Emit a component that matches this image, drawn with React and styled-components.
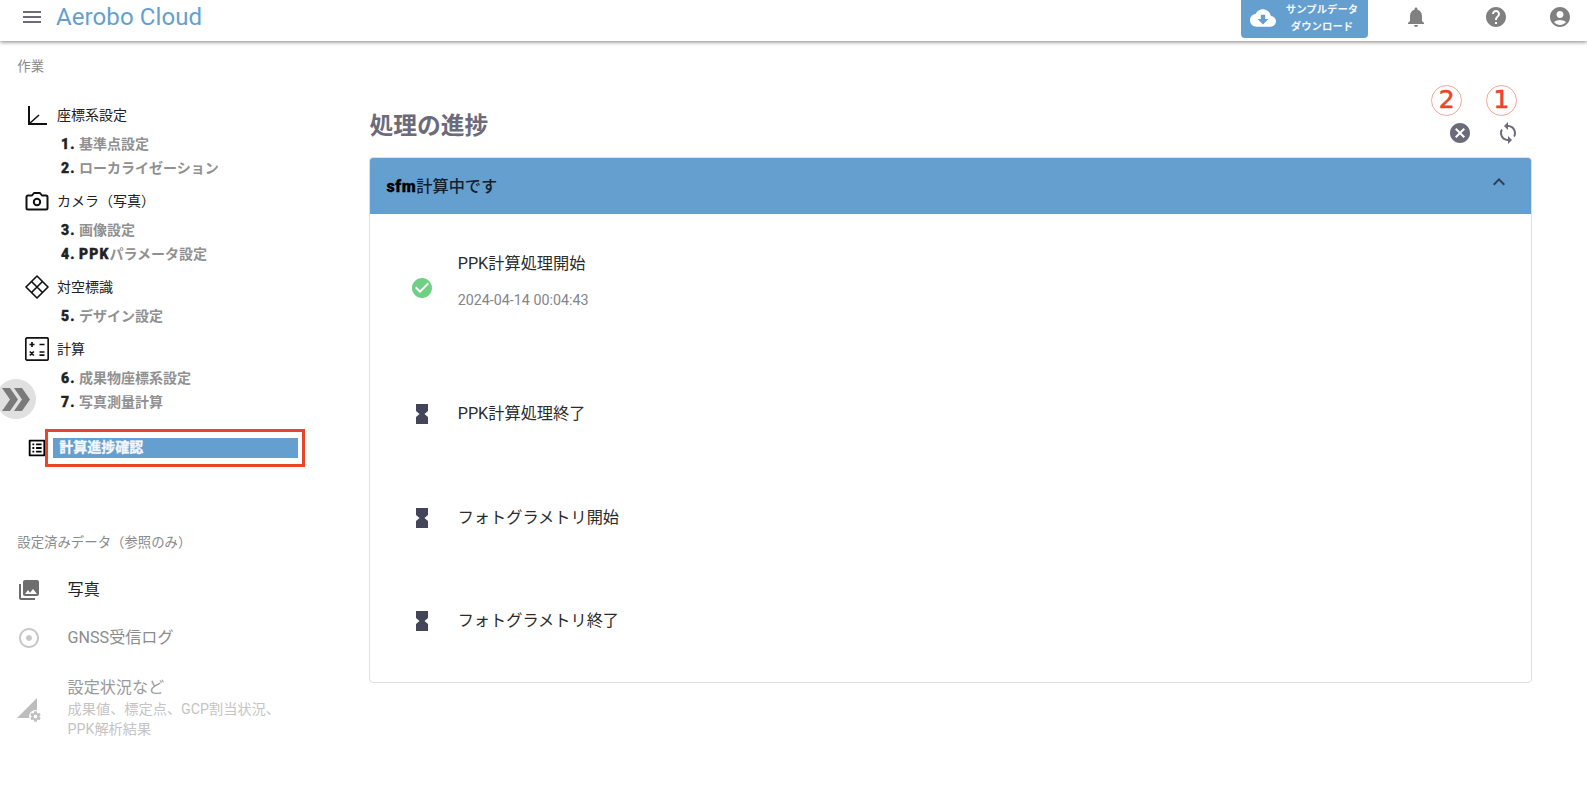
import React from 'react';
import styled, { createGlobalStyle } from 'styled-components';
import {
    MdMenu,
    MdCloudDownload,
    MdNotifications,
    MdHelp,
    MdAccountCircle,
    MdCancel,
    MdSync,
    MdCheckCircle,
    MdExpandLess,
    MdPhotoLibrary,
    MdAdjust,
    MdSettings,
    MdOutlineListAlt,
} from 'react-icons/md';

const FONT = `Roboto, "Noto Sans CJK JP", sans-serif`;
const BLUE = '#649fd0';

const GlobalStyle = createGlobalStyle`
    html, body {
        margin: 0;
        padding: 0;
        background: #fff;
        font-family: ${FONT};
    }
    * {
        box-sizing: border-box;
    }
`;

const Page = styled.div`
    width: 1587px;
    height: 797px;
    overflow: hidden;
    position: relative;
`;

const Header = styled.header`
    height: 41px;
    display: flex;
    align-items: center;
    background: #fff;
    box-shadow: 0 1px 4px rgba(0, 0, 0, 0.5);
    position: relative;
    padding-left: 20px;
`;

const MenuButton = styled.div`
    display: flex;
    color: #6b6b7b;
    font-size: 24px;
    margin-right: 12px;
    margin-top: -8px;
`;

const Logo = styled.div`
    color: ${BLUE};
    font-size: 24px;
    letter-spacing: 0.1px;
    margin-top: -8px;
    flex: 1;
`;

const DownloadButton = styled.div`
    width: 127px;
    height: 38px;
    margin-top: -3px;
    background: ${BLUE};
    border-radius: 0 0 4px 4px;
    display: flex;
    align-items: center;
    padding: 0 0 3px 9px;
    color: #fff;
`;

const DownloadText = styled.div`
    flex: 1;
    font-size: 10.4px;
    font-weight: 700;
    line-height: 17px;
    text-align: center;
    color: #f2f6fa;
`;

const HeaderIcon = styled.div`
    display: flex;
    color: #808080;
    font-size: 24px;
    margin-top: -8px;
    margin-left: ${(p) => p.$left}px;
    margin-right: ${(p) => p.$right || 0}px;
`;

const Body = styled.div`
    display: flex;
`;

const Sidebar = styled.aside`
    width: 369.4px;
    flex: none;
    padding: 16.8px 0 0 17.3px;
`;

const SectionLabel = styled.div`
    font-size: 13.4px;
    line-height: 18px;
    color: #8a8a8a;
    margin-top: ${(p) => p.$top || 0}px;
`;

const TaskList = styled.div`
    margin-top: 27.6px;
    margin-left: -17.3px;
`;

const GroupRow = styled.div`
    height: 24px;
    display: flex;
    align-items: center;
    font-size: 14px;
    color: #222;
    margin-top: ${(p) => p.$top || 0}px;
    margin-bottom: ${(p) => p.$bottom || 4.3}px;
`;

const GroupIcon = styled.div`
    width: 57px;
    padding-left: 25px;
    flex: none;
    display: flex;
    align-items: center;
`;

const GroupLabel = styled.span`
    margin-top: -2px;
`;

const StepRow = styled.div`
    height: 24px;
    line-height: 24px;
    padding-left: 61px;
    font-size: 14px;
    font-weight: 700;
    color: #909090;
    white-space: nowrap;
`;

const StepNo = styled.span`
    display: inline-block;
    width: 18px;
    color: #222;
    font-weight: 900;
    letter-spacing: 1px;
    -webkit-text-stroke: 0.4px #222;
`;

const StepStrong = styled.span`
    color: #222;
    font-weight: 900;
    letter-spacing: 1.1px;
    -webkit-text-stroke: 0.4px #222;
`;

const CurrentRow = styled.div`
    display: flex;
    align-items: center;
    margin-top: 14.8px;
    padding-left: 25.7px;
    color: #000;
    font-size: 22px;
`;

const RedBox = styled.div`
    width: 260px;
    height: 37.4px;
    margin-left: -2.4px;
    border: 3px solid #ea4528;
    padding: 5.4px 4.4px;
    display: flex;
`;

const CurrentBar = styled.div`
    flex: 1;
    height: 20px;
    line-height: 18px;
    background: ${BLUE};
    color: #f4f7fb;
    font-size: 14px;
    font-weight: 700;
    padding-left: 6.5px;
    -webkit-text-stroke: 0.3px #f4f7fb;
`;

const DataList = styled.div`
    margin-top: 13.7px;
    margin-left: -17.3px;
`;

const DataRow = styled.div`
    display: flex;
    align-items: center;
    height: ${(p) => p.$height || 47.6}px;
    padding-left: 17px;
`;

const DataIcon = styled.div`
    width: 50.6px;
    flex: none;
    display: flex;
    font-size: 24px;
    color: ${(p) => p.$color};
    position: relative;
`;

const DataTitle = styled.div`
    font-size: 16.1px;
    line-height: 22px;
    color: ${(p) => p.$color};
`;

const DataNote = styled.div`
    font-size: 14.2px;
    line-height: 20px;
    color: #c4c4c4;
    margin-top: -0.5px;
`;

const SettingsGear = styled.span`
    position: absolute;
    left: 12px;
    top: 12px;
    display: flex;
    font-size: 13px;
    color: #bdbdbd;
    background: #fff;
    border-radius: 50%;
`;

const CollapseHandle = styled.div`
    position: absolute;
    left: -4px;
    top: 379px;
    width: 40px;
    height: 40px;
    border-radius: 50%;
    background: #e0e0e0;
    display: flex;
    align-items: center;
    justify-content: center;
`;

const Main = styled.main`
    width: 1163px;
    flex: none;
`;

const TitleBar = styled.div`
    height: 116px;
    display: flex;
    align-items: flex-end;
    justify-content: space-between;
    padding: 0 12px 12px 0;
`;

const Title = styled.h1`
    margin: 0 0 2.5px;
    font-size: 23.8px;
    line-height: 34px;
    font-weight: 700;
    color: #6b6b7b;
`;

const Actions = styled.div`
    display: flex;
    gap: 24px;
`;

const ActionIcon = styled.div`
    position: relative;
    display: flex;
    color: #6b6b7b;
    font-size: 24px;
`;

const Callout = styled.span`
    position: absolute;
    top: -36px;
    left: ${(p) => p.$left}px;
    width: 31.4px;
    height: 31.4px;
    border-radius: 50%;
    border: 1.5px solid #f3a797;
    color: #ea4528;
    font-family: "DejaVu Sans", sans-serif;
    font-size: 25px;
    font-weight: 400;
    -webkit-text-stroke: 0.6px #ea4528;
    line-height: 28px;
    text-align: center;
`;

const Card = styled.section`
    height: 526px;
    border: 1px solid #e0e0e0;
    border-radius: 4px;
    overflow: hidden;
`;

const CardHeader = styled.div`
    height: 57px;
    margin: -1px -1px 0;
    background: ${BLUE};
    display: flex;
    align-items: center;
    justify-content: space-between;
    padding: 0 21px 2px 17px;
    font-size: 16.2px;
    font-weight: 500;
    color: #16202c;
`;

const HeaderStrong = styled.span`
    font-weight: 900;
    color: #000;
    letter-spacing: 0.6px;
    -webkit-text-stroke: 0.3px #000;
`;

const ChevronWrap = styled.div`
    display: flex;
    font-size: 24px;
    color: #2f3e52;
    margin-top: -6px;
`;

const StepItem = styled.div`
    display: flex;
    align-items: center;
    height: ${(p) => p.$height || 103.7}px;
    padding-left: 39.6px;
`;

const StepIcon = styled.div`
    width: 47.7px;
    flex: none;
    display: flex;
    font-size: 24px;
    color: ${(p) => p.$color || '#45455a'};
`;

const StepName = styled.div`
    font-size: 16.2px;
    color: #2b2b2b;
    line-height: 22px;
`;

const StepDate = styled.div`
    font-size: 14.3px;
    color: #85858a;
    line-height: 18px;
    margin: 16.7px 0 14px;
`;

const AxesIcon = () => (
    <svg width="24" height="24" viewBox="0 0 24 24" fill="none" stroke="#111">
        <path d="M4 3v18h18" strokeWidth="2" />
        <path d="M4 21l10-9" strokeWidth="1.6" />
    </svg>
);

const CameraIcon = () => (
    <svg width="24" height="24" viewBox="0 0 24 24" fill="none" stroke="#111" strokeWidth="2" strokeLinejoin="round">
        <path d="M3 6.5h4L9 4h6l2 2.5h4a1.5 1.5 0 0 1 1.5 1.5v11a1.5 1.5 0 0 1-1.5 1.5H3A1.5 1.5 0 0 1 1.5 19V8A1.5 1.5 0 0 1 3 6.5z" />
        <circle cx="12" cy="13" r="3.2" />
    </svg>
);

const TargetIcon = () => (
    <svg width="24" height="24" viewBox="0 0 24 24" fill="none" stroke="#111" strokeWidth="1.6">
        <path d="M12 1L23 12 12 23 1 12z" strokeLinejoin="round" />
        <path d="M6.5 6.5l11 11M17.5 6.5l-11 11" />
    </svg>
);

const CalcIcon = () => (
    <svg width="24" height="24" viewBox="0 0 24 24" fill="none" stroke="#111" strokeWidth="1.7">
        <rect x="0.8" y="0.8" width="22.4" height="22.4" rx="1.5" />
        <path d="M4.5 7.5h5M7 5v5M14.5 7.5h5M4.8 14.5l4 4M8.8 14.5l-4 4M14.5 15h5M14.5 18.2h5" />
    </svg>
);

const HourglassIcon = () => (
    <svg width="24" height="24" viewBox="0 0 24 24" fill="currentColor">
        <path d="M6 2h12v7l-3.5 3 3.5 3v7H6v-7l3.5-3L6 9z" />
    </svg>
);

const SlopeIcon = () => (
    <svg width="20" height="20" viewBox="0 0 20 20" fill="#bdbdbd">
        <path d="M0 20L20 0v20z" />
    </svg>
);

const DoubleChevron = () => (
    <svg width="28" height="23" viewBox="0 0 28 23" fill="#7a7a7a">
        <path d="M0 0h8l8 11.5-8 11.5H0l8-11.5z" />
        <path d="M12 0h8l8 11.5-8 11.5h-8l8-11.5z" />
    </svg>
);

const Step = ({ no, children }) => (
    <StepRow>
        <StepNo>{no}.</StepNo>
        {children}
    </StepRow>
);

const App = () => {
    return (
        <Page>
            <GlobalStyle />
            <Header>
                <MenuButton><MdMenu /></MenuButton>
                <Logo>Aerobo Cloud</Logo>
                <DownloadButton>
                    <MdCloudDownload size={26} />
                    <DownloadText>
                        サンプルデータ<br />ダウンロード
                    </DownloadText>
                </DownloadButton>
                <HeaderIcon $left={36}><MdNotifications /></HeaderIcon>
                <HeaderIcon $left={56}><MdHelp /></HeaderIcon>
                <HeaderIcon $left={40} $right={15}><MdAccountCircle /></HeaderIcon>
            </Header>
            <Body>
                <Sidebar>
                    <SectionLabel>作業</SectionLabel>
                    <TaskList>
                        <GroupRow>
                            <GroupIcon><AxesIcon /></GroupIcon>
                            <GroupLabel>座標系設定</GroupLabel>
                        </GroupRow>
                        <Step no={1}>基準点設定</Step>
                        <Step no={2}>ローカライゼーション</Step>
                        <GroupRow $top={9.7}>
                            <GroupIcon><CameraIcon /></GroupIcon>
                            <GroupLabel>カメラ（写真）</GroupLabel>
                        </GroupRow>
                        <Step no={3}>画像設定</Step>
                        <Step no={4}><StepStrong>PPK</StepStrong>パラメータ設定</Step>
                        <GroupRow $top={9.7}>
                            <GroupIcon><TargetIcon /></GroupIcon>
                            <GroupLabel>対空標識</GroupLabel>
                        </GroupRow>
                        <Step no={5}>デザイン設定</Step>
                        <GroupRow $top={9.5} $bottom={5.3}>
                            <GroupIcon><CalcIcon /></GroupIcon>
                            <GroupLabel>計算</GroupLabel>
                        </GroupRow>
                        <Step no={6}>成果物座標系設定</Step>
                        <Step no={7}>写真測量計算</Step>
                        <CurrentRow>
                            <MdOutlineListAlt />
                            <RedBox>
                                <CurrentBar>計算進捗確認</CurrentBar>
                            </RedBox>
                        </CurrentRow>
                    </TaskList>
                    <SectionLabel $top={67.8}>設定済みデータ（参照のみ）</SectionLabel>
                    <DataList>
                        <DataRow>
                            <DataIcon $color="#6e6e6e"><MdPhotoLibrary /></DataIcon>
                            <DataTitle $color="#222">写真</DataTitle>
                        </DataRow>
                        <DataRow>
                            <DataIcon $color="#c8c8c8"><MdAdjust /></DataIcon>
                            <DataTitle $color="#8c8c8c">GNSS受信ログ</DataTitle>
                        </DataRow>
                        <DataRow $height={93}>
                            <DataIcon $color="#bdbdbd">
                                <SlopeIcon />
                                <SettingsGear><MdSettings /></SettingsGear>
                            </DataIcon>
                            <div>
                                <DataTitle $color="#9a9a9a">設定状況など</DataTitle>
                                <DataNote>成果値、標定点、GCP割当状況、<br />PPK解析結果</DataNote>
                            </div>
                        </DataRow>
                    </DataList>
                </Sidebar>
                <Main>
                    <TitleBar>
                        <Title>処理の進捗</Title>
                        <Actions>
                            <ActionIcon>
                                <MdCancel />
                                <Callout $left={-17.3}>2</Callout>
                            </ActionIcon>
                            <ActionIcon>
                                <MdSync />
                                <Callout $left={-10.7}>1</Callout>
                            </ActionIcon>
                        </Actions>
                    </TitleBar>
                    <Card>
                        <CardHeader>
                            <div><HeaderStrong>sfm</HeaderStrong>計算中です</div>
                            <ChevronWrap><MdExpandLess /></ChevronWrap>
                        </CardHeader>
                        <StepItem $height={148}>
                            <StepIcon $color="#6fcf83"><MdCheckCircle /></StepIcon>
                            <div>
                                <StepName>PPK計算処理開始</StepName>
                                <StepDate>2024-04-14 00:04:43</StepDate>
                            </div>
                        </StepItem>
                        <StepItem>
                            <StepIcon><HourglassIcon /></StepIcon>
                            <StepName>PPK計算処理終了</StepName>
                        </StepItem>
                        <StepItem>
                            <StepIcon><HourglassIcon /></StepIcon>
                            <StepName>フォトグラメトリ開始</StepName>
                        </StepItem>
                        <StepItem>
                            <StepIcon><HourglassIcon /></StepIcon>
                            <StepName>フォトグラメトリ終了</StepName>
                        </StepItem>
                    </Card>
                </Main>
            </Body>
            <CollapseHandle><DoubleChevron /></CollapseHandle>
        </Page>
    );
};

export default App;
